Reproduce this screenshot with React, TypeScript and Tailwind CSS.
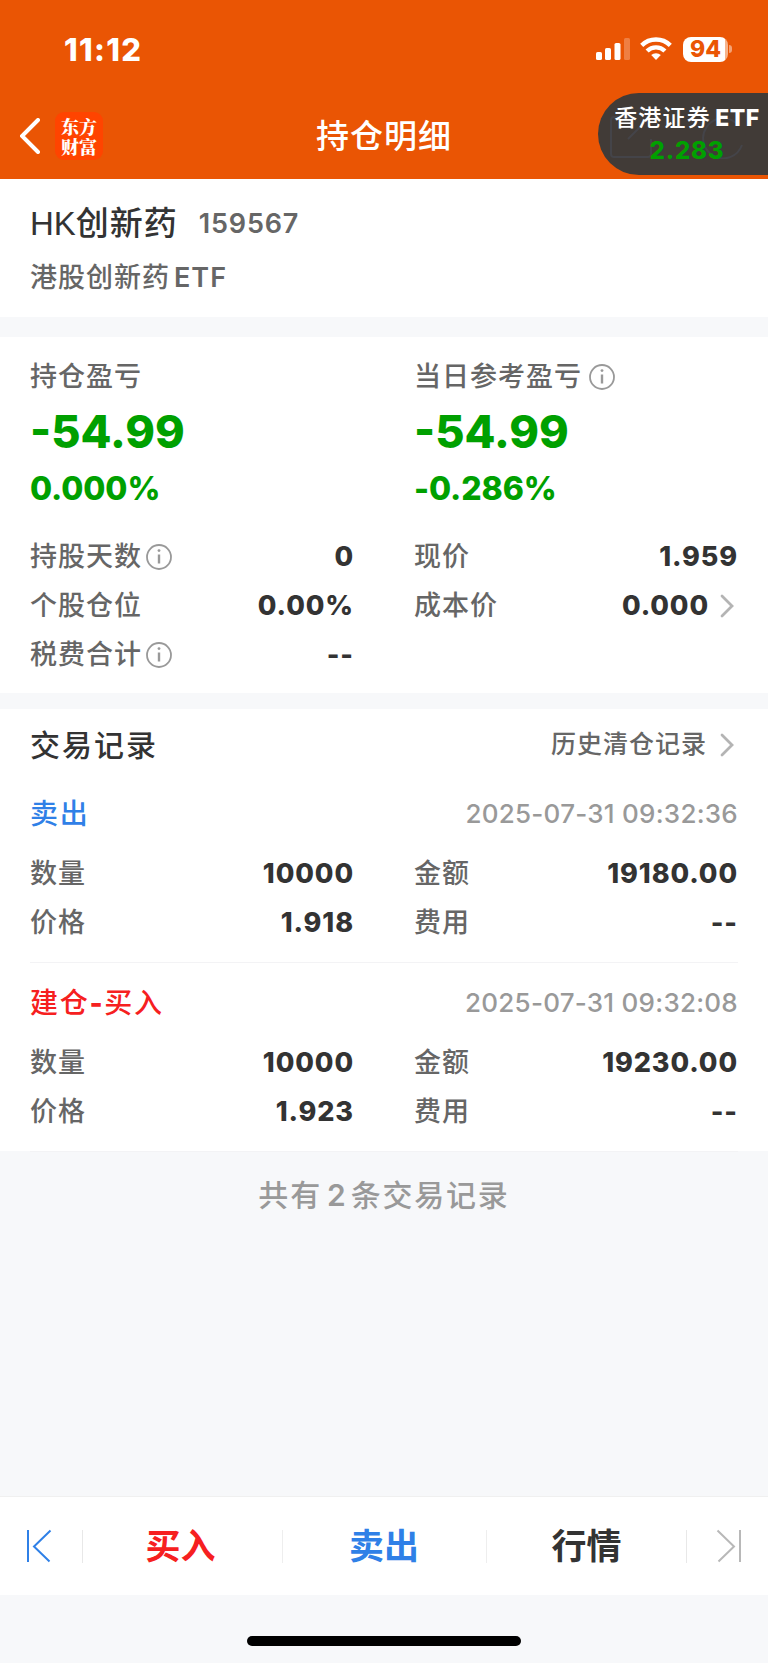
import type { ReactNode } from "react";

type Trade = {
  type: "buy" | "sell";
  title: string;
  time: string;
  count: string;
  amount: string;
  price: string;
  fee: string;
};

const trades: Trade[] = [
  { type: "sell", title: "卖出", time: "2025-07-31 09:32:36", count: "10000", amount: "19180.00", price: "1.918", fee: "--" },
  { type: "buy", title: "建仓-买入", time: "2025-07-31 09:32:08", count: "10000", amount: "19230.00", price: "1.923", fee: "--" },
];

function InfoIcon({ className = "" }: { className?: string }) {
  return (
    <svg viewBox="0 0 26 26" className={`size-[26px] shrink-0 ${className}`} fill="none" stroke="#999" strokeWidth="1.8">
      <circle cx="13" cy="13" r="12" />
      <path d="M13 10.5v9" strokeWidth="2.4" />
      <circle cx="13" cy="6.6" r="1.4" fill="#999" stroke="none" />
    </svg>
  );
}

function Arrow() {
  return (
    <svg viewBox="0 0 14 24" className="mr-[4px] h-6 w-[14px] shrink-0" fill="none" stroke="#b4b4b4" strokeWidth="2.8" strokeLinecap="round">
      <path d="M2 2l10 10L2 22" />
    </svg>
  );
}

function Row({ label, value, info, arrow }: { label: string; value: ReactNode; info?: boolean; arrow?: boolean }) {
  return (
    <div className="flex h-[49px] items-center">
      <span className="font-medium tracking-[1px] text-[#666]">{label}</span>
      {info && <InfoIcon className="ml-[4px]" />}
      <span className="ml-auto text-[27px] font-extrabold tracking-[0.9px] text-[#333]">{value}</span>
      {arrow && (
        <span className="ml-[11px] flex">
          <Arrow />
        </span>
      )}
    </div>
  );
}

function StatusBar() {
  return (
    <div className="flex h-[98px] items-center pl-[64px] pr-[36px] text-white">
      <span className="text-[31px] font-extrabold tracking-[1.300px]">11:12</span>
      <div className="ml-auto flex items-center">
        <svg viewBox="0 0 34 24" className="h-6 w-[34px]" fill="#fff">
          <rect x="0" y="15" width="6" height="8" rx="1.6" />
          <rect x="9" y="11" width="6" height="12" rx="1.6" />
          <rect x="18.500" y="6" width="6" height="17" rx="1.6" />
          <rect x="28" y="1" width="6" height="22" rx="1.6" opacity=".25" />
        </svg>
        <svg viewBox="0 0 32 24" className="ml-[10px] mr-px h-6 w-8" fill="none" stroke="#fff" strokeWidth="4.400">
          <path d="M1.700 8.400a20.400 20.400 0 0 1 28.600 0" />
          <path d="M7.100 14a12.700 12.700 0 0 1 17.800 0" />
          <path d="M16 23l-4.800-4.900a6.900 6.900 0 0 1 9.600 0z" fill="#fff" stroke="none" />
        </svg>
        <div className="ml-[10px] flex h-[25px] w-[45px] items-center justify-center overflow-hidden rounded-[8px] bg-[linear-gradient(90deg,#fff_94%,#f6b48c_94%)]">
          <span className="text-[23px] font-extrabold leading-none text-[#ea5504]">94</span>
        </div>
        <span className="ml-[1px] h-[8px] w-[3px] rounded-r-full bg-[#f4a275]" />
      </div>
    </div>
  );
}

function NavBar() {
  return (
    <div className="relative flex h-[81px] items-center pb-[5px]">
      <svg viewBox="0 0 20 36" className="ml-[20px] h-9 w-5" fill="none" stroke="#fff" strokeWidth="4" strokeLinecap="round">
        <path d="M18 2L2 18l16 16" />
      </svg>
      <div className="ml-[15px] grid size-[48px] place-content-center rounded-[9px] bg-[#ff4400] text-center font-['Noto_Serif_CJK_SC','Noto_Sans_CJK_SC',serif] text-[18px] font-black leading-[20px] text-white">
        <span>
          东方
          <br />
          财富
        </span>
      </div>
      <h1 className="ml-[213px] text-[33px] font-medium tracking-[1px] text-white">持仓明细</h1>
      {/* floating quote, docked at the right edge */}
      <div className="absolute right-0 top-[-5px] flex h-[82px] w-[170px] flex-col items-center justify-center rounded-l-full bg-[#413b37]">
        <svg viewBox="0 0 140 44" className="absolute left-[12px] top-[22px] h-[44px] w-[140px]" fill="none" stroke="#444449" strokeWidth="2">
          <path d="M22 2H4a3 3 0 0 0-3 3v34a3 3 0 0 0 3 3h34a3 3 0 0 0 3-3V24M18 24L40 2M126 8a20 20 0 1 0 6 22" />
        </svg>
        <span className="relative whitespace-nowrap pl-[8px] text-[23px] font-medium leading-[32px] tracking-[1.2px] text-white">
          香港证券 <b className="-ml-[3px] font-extrabold tracking-[0.5px]">ETF</b>
        </span>
        <span className="relative pl-[8px] text-[24px] font-extrabold leading-[33px] tracking-[0.800px] text-[#00a000]">2.283</span>
      </div>
    </div>
  );
}

function Profit({ label, amount, rate, info }: { label: string; amount: string; rate: string; info?: boolean }) {
  return (
    <div>
      <div className="flex h-[39px] items-center">
        <span className="font-medium tracking-[1px] text-[#666]">{label}</span>
        {info && <InfoIcon className="ml-[7px]" />}
      </div>
      <div className="h-[69px] text-[45px] font-extrabold leading-[71px] text-[#00a000]">{amount}</div>
      <div className="h-[48px] text-[32px] font-extrabold leading-[48px] tracking-[-0.1px] text-[#00a000]">{rate}</div>
    </div>
  );
}

function TradeItem({ trade }: { trade: Trade }) {
  return (
    <div className="mx-[30px] h-[189px] border-b border-[#f3f3f5] pt-[15px]">
      <div className="flex h-[50px] items-center justify-between">
        <span className={trade.type === "buy" ? "text-[28px] font-medium tracking-[1.700px] text-[#f62020]" : "text-[28px] font-medium tracking-[1.700px] text-[#2f80e7]"}>
          {trade.type === "buy" ? (
            <>
              建仓<b className="font-extrabold">-</b>买入
            </>
          ) : (
            trade.title
          )}
        </span>
        <span className="text-[26px] font-medium tracking-[0.25px] text-[#999]">{trade.time}</span>
      </div>
      <div className="mt-[10px] grid grid-cols-2 gap-x-[60px]">
        <Row label="数量" value={trade.count} />
        <Row label="金额" value={trade.amount} />
        <Row label="价格" value={trade.price} />
        <Row label="费用" value={trade.fee} />
      </div>
    </div>
  );
}

function Toolbar() {
  return (
    <div className="flex h-[99px] items-center border-t border-[#f0f0f0] bg-white text-[35px] font-bold">
      <div className="flex w-[82px] justify-center pr-[4px]">
        <svg viewBox="0 0 26 34" className="h-[34px] w-[26px]" fill="none" stroke="#2f80e7" strokeWidth="2">
          <path d="M2 1v32M24.500 1.500L8 17.500l15.500 15" />
        </svg>
      </div>
      <div className="h-[33px] w-px bg-[#e8e8e8]" />
      <div className="w-[199px] pr-[4px] text-center text-[#f62020]">买入</div>
      <div className="h-[33px] w-px bg-[#eee]" />
      <div className="w-[203px] pr-[1px] text-center text-[#2f80e7]">卖出</div>
      <div className="h-[33px] w-px bg-[#eee]" />
      <div className="w-[199px] text-center text-[#333]">行情</div>
      <div className="h-[33px] w-px bg-[#e8e8e8]" />
      <div className="flex flex-1 justify-center pl-[2px]">
        <svg viewBox="0 0 26 34" className="h-[34px] w-[26px]" fill="none" stroke="#b8b8b8" strokeWidth="2">
          <path d="M24 1v32M1.500 1.500L18 17.500l-15.500 15" />
        </svg>
      </div>
    </div>
  );
}

export default function App() {
  return (
    <div className="flex h-[1663px] w-[768px] flex-col overflow-hidden bg-[#f7f8fa] font-['Inter','Noto_Sans_CJK_SC',sans-serif] text-[27px] leading-none">
      <header className="bg-[#ea5504]">
        <StatusBar />
        <NavBar />
      </header>

      <section className="h-[138px] bg-white px-[30px] pt-[19px]">
        <div className="flex h-[50px] items-center">
          <span className="text-[33px] font-medium text-[#333]">
            <span className="font-['Liberation_Sans',sans-serif] font-normal">HK</span>
            <span className="tracking-[1px]">创新药</span>
          </span>
          <span className="ml-[21px] font-semibold tracking-[0.8px] text-[#666]">159567</span>
        </div>
        <div className="flex h-[58px] items-center font-medium tracking-[1px] text-[#666]">
          港股创新药<span className="ml-[4px] font-semibold">ETF</span>
        </div>
      </section>

      <section className="mt-[20px] h-[356px] bg-white px-[30px] pt-[20px]">
        <div className="grid grid-cols-2 gap-x-[60px]">
          <Profit label="持仓盈亏" amount="-54.99" rate="0.000%" />
          <Profit label="当日参考盈亏" amount="-54.99" rate="-0.286%" info />
        </div>
        <div className="mt-[19px] grid grid-cols-2 gap-x-[60px]">
          <Row label="持股天数" value="0" info />
          <Row label="现价" value="1.959" />
          <Row label="个股仓位" value="0.00%" />
          <Row label="成本价" value="0.000" arrow />
          <Row label="税费合计" value="--" info />
        </div>
      </section>

      <section className="mt-[16px] h-[442px] bg-white">
        <div className="flex h-[65px] items-center px-[30px] pt-[6px]">
          <h2 className="text-[30px] font-medium tracking-[2px] text-[#333]">交易记录</h2>
          <span className="ml-auto mr-[13px] text-[25px] font-medium tracking-[1px] text-[#666]">历史清仓记录</span>
          <Arrow />
        </div>
        {trades.map((trade) => (
          <TradeItem key={trade.time} trade={trade} />
        ))}
      </section>
      <p className="mt-[27px] text-center text-[30px] font-medium leading-[34px] tracking-[1.800px] text-[#999]">
        共有<span className="mx-[5px] font-semibold tracking-normal">2</span>条交易记录
      </p>

      <div className="mt-auto">
        <Toolbar />
        <div className="flex h-[68px] justify-center pt-[41px]">
          <div className="h-[10px] w-[274px] rounded-full bg-black" />
        </div>
      </div>
    </div>
  );
}
